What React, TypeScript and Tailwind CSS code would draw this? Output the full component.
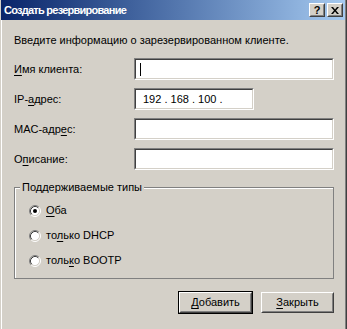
import React from 'react';

const U: React.FC<{ children: React.ReactNode }> = ({ children }) => (
  <span className="underline decoration-1 underline-offset-[2px]">{children}</span>
);

const Field: React.FC<{ className: string; children?: React.ReactNode }> = ({ className, children }) => (
  <div className={`h-[22px] border border-t-[#808080] border-l-[#808080] border-r-white border-b-white ${className}`}>
    <div className="h-full flex items-center bg-white border border-t-[#404040] border-l-[#404040] border-r-[#D4D0C8] border-b-[#D4D0C8] pl-[4px]">
      {children}
    </div>
  </div>
);

const Radio: React.FC<{ checked?: boolean; children: React.ReactNode }> = ({ checked, children }) => (
  <div className="h-[25px] flex items-center gap-[5px]">
    <svg width="12" height="12" viewBox="0 0 12 12" className="shrink-0">
      <circle cx="6" cy="6" r="4.5" fill="#fff" />
      <path d="M2.11 9.89 A5.5 5.5 0 0 1 9.89 2.11" fill="none" stroke="#808080" />
      <path d="M9.89 2.11 A5.5 5.5 0 0 1 2.11 9.89" fill="none" stroke="#fff" />
      <path d="M2.82 9.18 A4.5 4.5 0 0 1 9.18 2.82" fill="none" stroke="#404040" />
      <path d="M9.18 2.82 A4.5 4.5 0 0 1 2.82 9.18" fill="none" stroke="#D4D0C8" />
      {checked && <circle cx="6" cy="6" r="2" fill="#000" />}
    </svg>
    <span>{children}</span>
  </div>
);

const Button: React.FC<{ isDefault?: boolean; children: React.ReactNode }> = ({ isDefault, children }) => (
  <div className={`w-[75px] h-[23px] border ${isDefault ? 'border-black' : 'border-transparent'}`}>
    <div className="h-full border border-t-white border-l-white border-r-[#404040] border-b-[#404040]">
      <div className="h-full flex items-center justify-center border border-t-[#D4D0C8] border-l-[#D4D0C8] border-r-[#808080] border-b-[#808080]">
        {children}
      </div>
    </div>
  </div>
);

const CaptionButton: React.FC<{ children: React.ReactNode }> = ({ children }) => (
  <div className="w-[16px] h-[14px] bg-[#D4D0C8] border border-t-white border-l-white border-r-[#404040] border-b-[#404040]">
    <div className="h-full flex items-center justify-center border border-t-[#D4D0C8] border-l-[#D4D0C8] border-r-[#808080] border-b-[#808080]">
      {children}
    </div>
  </div>
);

export default function App() {
  return (
    <div className="w-[347px] h-[329px] flex bg-[#D4D0C8] text-black text-[11px] leading-[13px] font-['Liberation_Sans',Arial,sans-serif] overflow-hidden border-r border-[#404040]">
      <div className="flex-1 flex flex-col border-l border-[#D4D0C8] border-r border-r-[#808080]">
        {/* caption */}
        <div className="h-[20px] flex items-center bg-linear-to-r from-[#0A246A] to-[#A6CAF0] pl-[3px] pr-[2px]">
          <span className="flex-1 text-white font-bold text-[11px] tracking-[-0.75px]">Создать резервирование</span>
          <div className="flex gap-[2px]">
            <CaptionButton>
              <span className="font-bold text-[11px] leading-none">?</span>
            </CaptionButton>
            <CaptionButton>
              <svg width="8" height="7" viewBox="0 0 8 7">
                <path d="M0 0h2l2 2.5L6 0h2L5 3.5 8 7H6L4 4.5 2 7H0l3-3.5z" fill="#000" />
              </svg>
            </CaptionButton>
          </div>
        </div>

        {/* body */}
        <div className="flex-1 flex flex-col border-l border-white pl-[12px] pr-[10px] pt-[14px]">
          <p className="mb-[11px]">Введите информацию о зарезервированном клиенте.</p>

          <div className="flex flex-col gap-[8px] pr-px">
            <div className="flex items-center">
              <span className="w-[120px]"><U>И</U>мя клиента:</span>
              <Field className="flex-1">
                <span className="w-px h-[13px] bg-black" />
              </Field>
            </div>
            <div className="flex items-center">
              <span className="w-[120px]">IP-<U>а</U>дрес:</span>
              <Field className="w-[120px]">
                <span className="pl-[3px]">192 . 168 . 100 .</span>
              </Field>
            </div>
            <div className="flex items-center">
              <span className="w-[120px]">MAC-адр<U>е</U>с:</span>
              <Field className="flex-1" />
            </div>
            <div className="flex items-center">
              <span className="w-[120px]">О<U>п</U>исание:</span>
              <Field className="flex-1" />
            </div>
          </div>

          {/* group */}
          <div className="mt-[17px] mr-px relative border border-[#808080]">
            <div className="border-l border-t border-white pl-[13px] pt-[9px] pb-[5px]">
              <span className="absolute left-[5px] -top-[7px] bg-[#D4D0C8] px-[2px]">Поддерживаемые типы</span>
              <Radio checked><U>О</U>ба</Radio>
              <Radio>то<U>л</U>ько DHCP</Radio>
              <Radio>толь<U>к</U>о BOOTP</Radio>
            </div>
          </div>

          <div className="flex justify-end gap-[7px] mt-[12px]">
            <Button isDefault><span><U>Д</U>обавить</span></Button>
            <Button><span><U>З</U>акрыть</span></Button>
          </div>
        </div>
      </div>
    </div>
  );
}
